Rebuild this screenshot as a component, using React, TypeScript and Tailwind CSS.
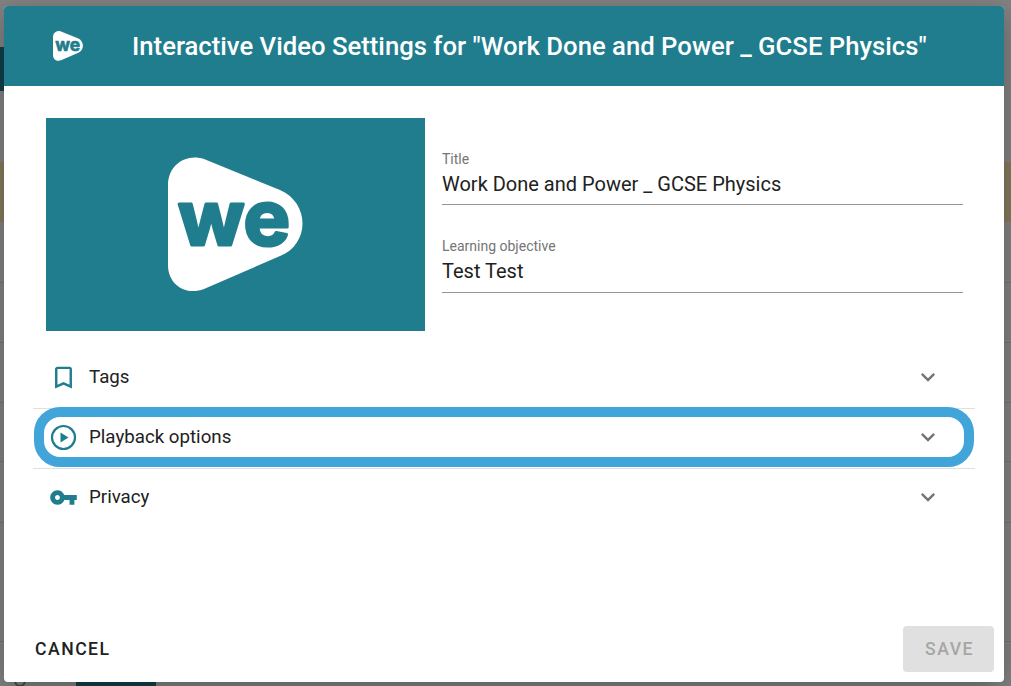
import { ReactNode } from "react";

const WeLogo = ({ className, bg }: { className: string; bg: string }) => (
  <svg className={className} viewBox="0 0 135 135">
    <path
      d="M0 28C0 8 18-4 36 2L112 33C142 46 142 87 112 99L36 132C18 139 0 128 0 108Z"
      fill="#fff"
    />
    <text
      x="10"
      y="88"
      fill={bg}
      stroke={bg}
      strokeWidth="3"
      strokeLinejoin="round"
      fontFamily="Inter, sans-serif"
      fontWeight="700"
      fontSize="76"
      textLength="112"
      lengthAdjust="spacingAndGlyphs"
    >
      we
    </text>
  </svg>
);

const BookmarkIcon = () => (
  <svg width="29" height="29" viewBox="0 0 24 24" fill="#1f7d8e">
    <path d="M17 3H7C5.9 3 5 3.900 5 5v16l7-3 7 3V5c0-1.100-.9-2-2-2zm0 15l-5-2.180L7 18V5h10v13z" />
  </svg>
);

const PlayIcon = () => (
  <svg width="29" height="29" viewBox="0 0 29 29" fill="none">
    <circle cx="14.500" cy="14.500" r="11.500" stroke="#1f7d8e" strokeWidth="2.200" />
    <path d="M11.500 9.500l8 5-8 5z" fill="#1f7d8e" />
  </svg>
);

const KeyIcon = () => (
  <svg width="29" height="29" viewBox="0 0 24 24" fill="#1f7d8e">
    <path d="M12.650 10C11.830 7.670 9.610 6 7 6c-3.310 0-6 2.690-6 6s2.690 6 6 6c2.610 0 4.830-1.670 5.650-4H17v4h4v-4h2v-4H12.650zM7 14c-1.100 0-2-.9-2-2s.9-2 2-2 2 .9 2 2-.9 2-2 2z" />
  </svg>
);

const Chevron = () => (
  <svg width="28" height="28" viewBox="0 0 24 24" fill="#757575">
    <path d="M16.590 8.590L12 13.170 7.410 8.590 6 10l6 6 6-6z" />
  </svg>
);

const Field = ({ label, value, className }: { label: string; value: string; className: string }) => (
  <div className={`flex flex-col border-b border-[#949494] ${className}`}>
    <div className="text-[14px] leading-[16px] text-[#757575]">{label}</div>
    <div className="mt-[3px] text-[20px] leading-[28px] text-[#212121]">{value}</div>
  </div>
);

const Row = ({ icon, label, divider }: { icon: ReactNode; label: string; divider?: boolean }) => (
  <div className={`flex h-[60px] items-center border-t pb-[3px] pl-[16px] pr-[33px] ${divider ? "border-[#e0e0e0]" : "border-transparent"}`}>
    <div className="flex w-[40px] items-center">{icon}</div>
    <div className="flex-1 text-[18.720px] text-[#212121]">{label}</div>
    <Chevron />
  </div>
);

export default function App() {
  return (
    <div className="relative h-[686px] w-[1011px] overflow-hidden bg-[#838383] font-['Roboto',sans-serif]">
      {/* page behind the backdrop */}
      <div className="absolute left-0 top-[47px] h-[44px] w-[4px] bg-[#114049]" />
      <div className="absolute left-0 top-[162px] h-[60px] w-full bg-[#857c5f]" />
      <div className="absolute left-0 top-[282px] h-px w-full bg-[#757575]" />
      <div className="absolute left-0 top-[342px] h-px w-full bg-[#757575]" />
      <div className="absolute left-0 top-[402px] h-px w-full bg-[#757575]" />
      <div className="absolute left-0 top-[461px] h-px w-full bg-[#757575]" />
      <div className="absolute left-0 top-[522px] h-px w-full bg-[#757575]" />
      <div className="absolute left-0 top-[641px] h-px w-full bg-[#757575]" />
      <div className="absolute left-[76px] top-[682px] h-[4px] w-[80px] bg-[#114049]" />
      <div className="absolute left-[14px] top-[680px] h-[7px] w-[12px] rounded-b-[6px] border-2 border-[#4a4a4a]" />

      <div className="absolute left-[4px] top-[6px] flex h-[676px] w-[1000px] flex-col overflow-hidden rounded-[4px] bg-white shadow-[0_8px_30px_rgba(0,0,0,0.3)]">
        <div className="flex h-[80px] shrink-0 items-center bg-[#1f7d8e]">
          <WeLogo className="ml-[49px] h-[30px] w-[30px]" bg="#1f7d8e" />
          <div className="ml-[49px] whitespace-nowrap text-[25.700px] font-medium text-white">
            Interactive Video Settings for "Work Done and Power _ GCSE Physics"
          </div>
        </div>

        <div className="flex pl-[42px] pr-[41px] pt-[32px]">
          <div className="flex h-[213px] w-[379px] shrink-0 items-center justify-center bg-[#1f7d8e]">
            <WeLogo className="h-[135px] w-[135px]" bg="#1f7d8e" />
          </div>
          <div className="ml-[17px] flex flex-1 flex-col gap-[33px] pt-[33px]">
            <Field label="Title" value="Work Done and Power _ GCSE Physics" className="h-[54px]" />
            <Field label="Learning objective" value="Test Test" className="h-[55px]" />
          </div>
        </div>

        <div className="relative mx-[29px] mt-[17px]">
          <Row icon={<BookmarkIcon />} label="Tags" />
          <Row icon={<PlayIcon />} label="Playback options" divider />
          <Row icon={<KeyIcon />} label="Privacy" divider />
          <div className="absolute left-[1px] right-[1px] top-[59px] h-[60px] rounded-[26px] border-[10px] border-[#42a5da]" />
        </div>

        <div className="mt-auto flex items-center justify-between pb-[10px] pl-[31px] pr-[10px]">
          <div className="text-[17.600px] font-medium tracking-[1.500px] text-[#212121]">CANCEL</div>
          <div className="flex h-[46px] w-[91px] items-center justify-center rounded-[4px] bg-[#e0e0e0] pl-[2px] pt-[1px] text-[17.600px] font-medium tracking-[1.500px] text-[#a6a6a6]">
            SAVE
          </div>
        </div>
      </div>
    </div>
  );
}
